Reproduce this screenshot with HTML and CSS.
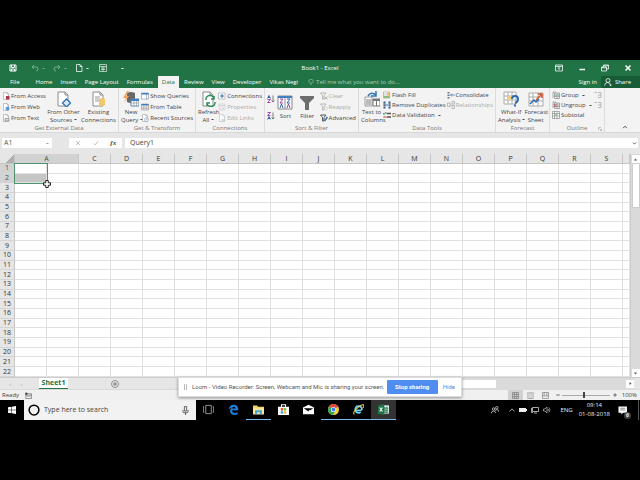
FILE: index.html
```html
<!DOCTYPE html>
<html lang="en">
<head>
<meta charset="utf-8">
<title>Book1 - Excel</title>
<link rel="stylesheet" href="styles.css">
</head>
<body>
<svg class="defs" aria-hidden="true">
  <symbol id="doc" viewBox="0 0 16 16"><path d="M3 1h7l3 3v11H3z" fill="#fff" stroke="#8a8a8a"/><path d="M10 1v3h3" fill="none" stroke="#8a8a8a"/></symbol>
  <symbol id="grid" viewBox="0 0 16 16"><path d="M1 2h14v12H1z" fill="#fff" stroke="#777"/><path d="M1 2h14v3H1z" fill="#3f7fbf"/><path d="M1 8h14M1 11h14M5.500 5v9M10.500 5v9" stroke="#888" fill="none"/></symbol>
  <symbol id="funnel" viewBox="0 0 16 16"><path d="M1 1h14v2l-5 5v7H6V8L1 3z" fill="currentColor"/></symbol>
</svg>

<div class="app">
  <header class="top">
    <div class="titlebar">
      <div class="quick">
        <button aria-label="Save"><svg viewBox="0 0 16 16"><path d="M2 2h12v12H2zM5 2v5h6V2M5 14v-4h6v4" fill="none" stroke="#fff" stroke-width="2"/></svg></button>
        <button class="dim" aria-label="Undo"><svg viewBox="0 0 16 16"><path d="M6 2L2 6l4 4M2 6h8q4 0 4 4t-4 4" fill="none" stroke="#fff" stroke-width="2"/></svg><i></i></button>
        <button class="dim" aria-label="Redo"><svg viewBox="0 0 16 16"><path d="M10 2l4 4-4 4M14 6H6q-4 0-4 4t4 4" fill="none" stroke="#fff" stroke-width="2"/></svg><i></i></button>
        <button class="new" aria-label="New"><svg viewBox="0 0 16 16"><path d="M3 1h7l4 4v10H3zM10 1v4h4" fill="none" stroke="#fff" stroke-width="1.500"/></svg><i></i></button>
        <button aria-label="Form"><svg viewBox="0 0 16 16"><path d="M1 1h14v14H1zM1 5h14M4 8h8M4 11h8M8 5v10" fill="none" stroke="#d5e8dc" stroke-width="1.500"/></svg></button>
        <button aria-label="Customize toolbar"><i></i></button>
      </div>
      <h1>Book1 - Excel</h1>
      <div class="window">
        <button aria-label="Ribbon display options"><svg viewBox="0 0 16 16"><path d="M1 2h14v12H1zM1 5h14M8 12V7M6 9l2-2 2 2" fill="none" stroke="#fff" stroke-width="1.500"/></svg></button>
        <button aria-label="Minimize"><svg viewBox="0 0 16 16"><path d="M3 11h11" stroke="#fff" stroke-width="3"/></svg></button>
        <button aria-label="Restore"><svg viewBox="0 0 16 16"><path d="M1 6h10v8H1zM1 7.500h10M5 6V2h10v8h-4M5 3.500h10" fill="none" stroke="#fff" stroke-width="1.500"/></svg></button>
        <button aria-label="Close"><svg viewBox="0 0 16 16"><path d="M3 3l10 10M13 3L3 13" stroke="#fff" stroke-width="3"/></svg></button>
      </div>
    </div>
    <nav class="tabs">
      <a class="file" href="#">File</a><a href="#">Home</a><a href="#">Insert</a><a href="#">Page Layout</a><a href="#">Formulas</a><a class="on" href="#">Data</a><a href="#">Review</a><a href="#">View</a><a href="#">Developer</a><a href="#">Vikas Negi</a>
      <a class="tell" href="#"><svg viewBox="0 0 16 16"><path d="M5 11q-3-3-3-5a6 5 0 0 1 12 0q0 2-3 5zM6 14h4" fill="none" stroke="#a9cfb8" stroke-width="1.500"/></svg>Tell me what you want to do...</a>
      <a class="sign" href="#">Sign in</a>
      <button class="share"><svg viewBox="0 0 16 16"><circle cx="8" cy="5" r="4" fill="none" stroke="#fff" stroke-width="1.500"/><path d="M1 15q1-6 6-6t5 3M11 14h4M13 12v4" fill="none" stroke="#fff" stroke-width="1.500"/></svg>Share</button>
    </nav>
  </header>

  <section class="ribbon">
    <div class="group external">
      <div class="items">
        <div class="stack">
          <button><svg viewBox="0 0 16 16"><use href="#doc"/><path d="M8 8h7v7H8z" fill="#b5344a"/></svg>From Access</button>
          <button><svg viewBox="0 0 16 16"><use href="#doc"/><circle cx="11" cy="11" r="4" fill="#5b9bd5"/></svg>From Web</button>
          <button><svg viewBox="0 0 16 16"><use href="#doc"/><path d="M6 9h8v5H6z" fill="#ddd" stroke="#666"/></svg>From Text</button>
        </div>
        <button class="big w36"><svg viewBox="0 0 16 16"><use href="#doc"/><path d="M11.500 8l4 4-4 4-4-4z" fill="#dbe9f7" stroke="#2f74b5" stroke-width="1.300"/></svg>From Other<br>Sources <i></i></button>
        <button class="big w36"><svg viewBox="0 0 16 16"><use href="#doc"/><path d="M5 6h5M5 8h4M5 10h4" stroke="#999"/><path d="M9 8q3-2 6 0v6q-3 2-6 0z" fill="#f0c76b"/></svg>Existing<br>Connections</button>
      </div>
      <h2>Get External Data</h2>
    </div>
    <div class="group transform">
      <div class="items">
        <button class="big w24"><svg viewBox="0 0 16 16"><path d="M4 2q4-2 8 0v9q-4 2-8 0z" fill="#686868"/><path d="M4 0L0 7h3l-2 5 5-7H3l3-5z" fill="#eda35b"/><path d="M8 8h8v7H8z" fill="#fff" stroke="#5a87b8"/><path d="M8 8h8v2H8z" fill="#3f7fbf"/><path d="M8 12h8M11 10v5M13.500 10v5" stroke="#999" stroke-width=".7"/></svg>New<br>Query <i></i></button>
        <div class="stack">
          <button><svg viewBox="0 0 16 16"><path d="M1 2h14v12H1z" fill="#fff" stroke="#777"/><path d="M1 2h14v3H1zM10 5h1v9h-1z" fill="#3f7fbf"/></svg>Show Queries</button>
          <button><svg viewBox="0 0 16 16"><use href="#grid"/></svg>From Table</button>
          <button><svg viewBox="0 0 16 16"><use href="#doc"/><circle cx="11" cy="11" r="4" fill="#fff" stroke="#5b8fc5"/><path d="M11 9v2h2" fill="none" stroke="#555"/></svg>Recent Sources</button>
        </div>
      </div>
      <h2>Get &amp; Transform</h2>
    </div>
    <div class="group connections">
      <div class="items">
        <button class="big w24"><svg viewBox="0 0 16 16"><use href="#doc"/><path d="M6 9a4 4 0 0 1 8-1M14 5v3h-3M15 11a4 4 0 0 1-8 1M7 15v-3h3" fill="none" stroke="#2f8f5b" stroke-width="1.500"/></svg>Refresh<br>All <i></i></button>
        <div class="stack">
          <button><svg viewBox="0 0 16 16"><path d="M1 2h13v12H1z" fill="#fff" stroke="#888"/><path d="M4 8h8M8 4v8" stroke="#2f74b5" stroke-width="2"/></svg>Connections</button>
          <button class="off" disabled><svg viewBox="0 0 16 16"><path d="M2 2h12v12H2zM2 5h12M4 8h2M8 8h4M4 11h2M8 11h4" fill="none" stroke="#999"/></svg>Properties</button>
          <button class="off" disabled><svg viewBox="0 0 16 16"><use href="#doc"/><path d="M7 12h7" stroke="#888" stroke-width="2"/></svg>Edit Links</button>
        </div>
      </div>
      <h2>Connections</h2>
    </div>
    <div class="group sort">
      <div class="items">
        <div class="pair">
          <button aria-label="Sort A to Z"><svg viewBox="0 0 16 16"><path d="M1 7l3-6 3 6M2 5h4" fill="none" stroke="#2f5fae" stroke-width="1.800"/><path d="M1 9h6l-6 6h6" fill="none" stroke="#9b3fa5" stroke-width="1.800"/><path d="M12 1v13M9 11l3 3 3-3" fill="none" stroke="#555" stroke-width="1.500"/></svg></button>
          <button aria-label="Sort Z to A"><svg viewBox="0 0 16 16"><path d="M1 1h6L1 7h6" fill="none" stroke="#9b3fa5" stroke-width="1.800"/><path d="M1 15l3-6 3 6M2 13h4" fill="none" stroke="#2f5fae" stroke-width="1.800"/><path d="M12 1v13M9 11l3 3 3-3" fill="none" stroke="#555" stroke-width="1.500"/></svg></button>
        </div>
        <button class="big w20 one"><svg viewBox="0 0 16 16"><path d="M1 1h14v13H1z" fill="#fff" stroke="#888"/><path d="M1 1h14v2H1z" fill="#3f7fbf"/><path d="M8 3v11" stroke="#888"/><path d="M3 4h3L3 8h3M10 13l1.500-4 1.500 4" fill="none" stroke="#9b3fa5"/><path d="M3 13l1.500-4L6 13M10 4h3l-3 4h3" fill="none" stroke="#2f5fae"/></svg>Sort</button>
        <button class="big w24 one"><svg class="gray" viewBox="0 0 16 16"><use href="#funnel"/></svg>Filter</button>
        <div class="stack">
          <button class="off" disabled><svg viewBox="0 0 16 16"><path d="M1 2h11L8 7v7H5V7z" fill="none" stroke="#777" stroke-width="1.500"/><path d="M9 9l6 6M15 9l-6 6" stroke="#888" stroke-width="2"/></svg>Clear</button>
          <button class="off" disabled><svg viewBox="0 0 16 16"><path d="M1 2h11L8 7v7H5V7z" fill="none" stroke="#777" stroke-width="1.500"/><circle cx="12" cy="11" r="3" fill="#fff" stroke="#888"/></svg>Reapply</button>
          <button><svg viewBox="0 0 16 16"><path d="M1 2h11L8 7v7H5V7z" fill="none" stroke="#555" stroke-width="2"/><path d="M9 14l6-8" stroke="#2f74b5" stroke-width="3"/></svg>Advanced</button>
        </div>
      </div>
      <h2>Sort &amp; Filter</h2>
    </div>
    <div class="group tools">
      <div class="items">
        <button class="big w28"><svg viewBox="0 0 16 16"><path d="M1 6h7v9H1z" fill="#fff" stroke="#999"/><path d="M2 9h5M2 11h5M2 13h5" stroke="#777"/><path d="M9 8h7v7H9z" fill="#fff" stroke="#777"/><path d="M9 8h7v2H9z" fill="#777"/><path d="M12.500 10v5" stroke="#777"/><path d="M4 5q3-5 8-1M12 0v5H7" fill="none" stroke="#2f74b5" stroke-width="1.500"/></svg>Text to<br>Columns</button>
        <div class="stack tight">
          <button><svg viewBox="0 0 16 16"><path d="M1 2h12v12H1zM1 6h12M1 10h12" fill="#fff" stroke="#888"/><path d="M1 10h12v4H1z" fill="#8bbd78"/><path d="M12 0L7 7h3l-2 5 6-7h-3z" fill="#f0b34b"/></svg>Flash Fill</button>
          <button><svg viewBox="0 0 16 16"><path d="M1 1h4v14H1zM11 1h4v14h-4z" fill="#35618e"/><path d="M1 6h4M11 6h4M1 11h4M11 11h4M5 8h6" stroke="#fff"/><path d="M5 8h5" stroke="#333" stroke-width="1.500"/></svg>Remove Duplicates</button>
          <button><svg viewBox="0 0 16 16"><path d="M7 5h9M7 12h9" stroke="#555" stroke-width="3"/><path d="M0 4l2 3 4-5" fill="none" stroke="#2f8f5b" stroke-width="2"/><path d="M1 10l4 4M5 10l-4 4" stroke="#c43" stroke-width="1.500"/></svg>Data Validation <i></i></button>
        </div>
        <div class="stack tight">
          <button><svg viewBox="0 0 16 16"><path d="M1 2h4v3H1zM1 7h4v3H1zM1 12h4v3H1z" fill="#777"/><path d="M7 8h9M10 5L7 8l3 3" fill="none" stroke="#2f74b5" stroke-width="1.500"/></svg>Consolidate</button>
          <button class="off" disabled><svg viewBox="0 0 16 16"><path d="M1 4h5v7H1zM10 1h5v5h-5zM10 9h5v6h-5zM6 8h4" fill="none" stroke="#777" stroke-width="1.500"/></svg>Relationships</button>
        </div>
      </div>
      <h2>Data Tools</h2>
    </div>
    <div class="group forecast">
      <div class="items">
        <button class="big w28"><svg viewBox="0 0 16 16"><path d="M1 1h12v12H1zM1 5h12M1 9h12M5 1v12M9 1v12" fill="#fff" stroke="#aaa"/><path d="M5 5h4v4H5z" fill="#f3cf86"/><path d="M9 8q0-3 3-3t3 3-3 4M12 13.500v2" fill="none" stroke="#2b6cb0" stroke-width="2"/></svg>What-If<br>Analysis <i></i></button>
        <button class="big w24"><svg viewBox="0 0 16 16"><path d="M1 2h14v13H1zM1 6h14M1 10h14M5 2v13M10 2v13" fill="#fff" stroke="#aaa"/><path d="M2 13l4-4 2 2 3-3" fill="none" stroke="#2b6cb0" stroke-width="1.500"/><path d="M8 9l6-6M10 3h4v4" fill="none" stroke="#d4562f" stroke-width="1.500"/></svg>Forecast<br>Sheet</button>
      </div>
      <h2>Forecast</h2>
    </div>
    <div class="group outline">
      <div class="items">
        <div class="stack tight">
          <button><svg viewBox="0 0 16 16"><path d="M5 4h10v11H5zM5 8h10M5 11h10M10 4v11M2 14V2h6" fill="none" stroke="#666"/><path d="M6 8h8v3H6z" fill="#9ac5a7"/></svg>Group <i></i></button>
          <button><svg viewBox="0 0 16 16"><path d="M5 4h10v11H5zM5 8h10M5 11h10M10 4v11M2 14V2h6" fill="none" stroke="#666"/><path d="M3 6l6 6M9 6l-6 6" stroke="#c44" stroke-width="1.500"/></svg>Ungroup <i></i></button>
          <button><svg viewBox="0 0 16 16"><path d="M1 1h14v14H1zM1 5h14M1 10h14M5 1v14M10 1v14" fill="#fff" stroke="#666"/><path d="M5 5h5v5H5z" fill="#9ac5a7"/></svg>Subtotal</button>
        </div>
        <div class="stack tight detail">
          <button class="off" disabled aria-label="Show detail"><svg viewBox="0 0 16 16"><path d="M1 3h5M8 3h6v10H8M8 8h6" fill="none" stroke="#777" stroke-width="1.500"/></svg></button>
          <button class="off" disabled aria-label="Hide detail"><svg viewBox="0 0 16 16"><path d="M1 3h5M8 3h6v10H8M8 8h6" fill="none" stroke="#777" stroke-width="1.500"/></svg></button>
        </div>
      </div>
      <h2>Outline</h2>
      <button class="launch" aria-label="Outline settings"><svg viewBox="0 0 16 16"><path d="M2 12V2h10M6 6l8 8M14 8v6H8" fill="none" stroke="#777" stroke-width="1.500"/></svg></button>
    </div>
    <button class="collapse" aria-label="Collapse ribbon"><svg viewBox="0 0 16 16"><path d="M3 11l5-5 5 5" fill="none" stroke="#444" stroke-width="2.500"/></svg></button>
  </section>

  <section class="formula">
    <label class="name"><input aria-label="Name box" value="A1"><i></i></label>
    <span class="dots"></span>
    <div class="edit">
      <button aria-label="Cancel"><svg viewBox="0 0 16 16"><path d="M3 3l10 10M13 3L3 13" stroke="#aaa" stroke-width="2"/></svg></button>
      <button aria-label="Enter"><svg viewBox="0 0 16 16"><path d="M2 9l4 4 8-10" fill="none" stroke="#aaa" stroke-width="2"/></svg></button>
      <button class="fx" aria-label="Insert function">fx</button>
    </div>
    <input class="bar" aria-label="Formula bar" value="Query1">
    <button class="expand" aria-label="Expand formula bar"><svg viewBox="0 0 16 16"><path d="M3 5l5 5 5-5" fill="none" stroke="#555" stroke-width="3"/></svg></button>
  </section>

  <main class="sheet">
    <div class="cells">
      <table id="cells"></table>
      <div class="range"></div>
      <svg class="cursor" viewBox="0 0 16 16"><path d="M5.500 1h5v4.500H15v5h-4.500V15h-5v-4.500H1v-5h4.500z" fill="#fff" stroke="#222" stroke-width="2"/></svg>
    </div>
    <div class="vscroll">
      <button aria-label="Scroll up"><svg viewBox="0 0 16 16"><path d="M3 11l5-6 5 6z" fill="#555"/></svg></button>
      <span class="thumb"></span>
      <button aria-label="Scroll down"><svg viewBox="0 0 16 16"><path d="M3 5l5 6 5-6z" fill="#555"/></svg></button>
    </div>
  </main>

  <footer class="bottom">
    <div class="sheets">
      <button class="nav" aria-label="Previous sheet">‹</button>
      <button class="nav" aria-label="Next sheet">›</button>
      <a class="current" href="#">Sheet1</a>
      <button class="add" aria-label="New sheet"><svg viewBox="0 0 16 16"><circle cx="8" cy="8" r="7" fill="none" stroke="#777" stroke-width="1.500"/><path d="M8 4v8M4 8h8" stroke="#777" stroke-width="2"/></svg></button>
      <div class="hscroll"><span class="thumb"></span><button aria-label="Scroll right"><svg viewBox="0 0 16 16"><path d="M5 3l6 5-6 5z" fill="#444"/></svg></button></div>
    </div>
    <div class="status">
      <span>Ready</span>
      <svg class="macro" viewBox="0 0 16 16"><path d="M2 4h13v11H2zM2 7h13M5 10h3M10 10h3" fill="none" stroke="#666" stroke-width="1.500"/><circle cx="3" cy="4" r="3" fill="#555"/></svg>
      <button class="view on" aria-label="Normal"><svg viewBox="0 0 16 16"><path d="M1 1h14v14H1zM1 5.500h14M1 10.500h14M5.500 1v14M10.500 1v14" fill="none" stroke="#777" stroke-width="1.500"/></svg></button>
      <button class="view" aria-label="Page layout"><svg viewBox="0 0 16 16"><path d="M1 1h14v14H1zM4 3h8v12H4zM6 6h4M6 9h4M6 12h4" fill="none" stroke="#888"/></svg></button>
      <button class="view" aria-label="Page break preview"><svg viewBox="0 0 16 16"><path d="M1 1h14v14H1zM5 1v8h6V1M1 9h4M11 9h4" fill="none" stroke="#777" stroke-width="1.500"/></svg></button>
      <button class="step" aria-label="Zoom out"><svg viewBox="0 0 16 16"><path d="M1 8h14" stroke="#444" stroke-width="3"/></svg></button>
      <input class="zoom" type="range" aria-label="Zoom" min="0" max="100" value="46">
      <button class="step" aria-label="Zoom in"><svg viewBox="0 0 16 16"><path d="M1 8h14M8 1v14" stroke="#444" stroke-width="3"/></svg></button>
      <span class="percent">100%</span>
    </div>
    <div class="notice">
      <span class="grip"></span>
      <span class="msg">Loom - Video Recorder: Screen, Webcam and Mic is sharing your screen.</span>
      <button class="stop">Stop sharing</button>
      <a href="#">Hide</a>
    </div>
  </footer>
</div>

<div class="taskbar">
  <button class="start" aria-label="Start"><svg viewBox="0 0 16 16"><path d="M0 2.500l7-1v6H0zM8 1.300L16 0v7.500H8zM0 8.500h7v6l-7-1zM8 8.500h8V16l-8-1.300z" fill="#fff"/></svg></button>
  <label class="search"><svg viewBox="0 0 16 16"><circle cx="8" cy="8" r="6.500" fill="none" stroke="#000" stroke-width="2"/></svg><input placeholder="Type here to search" aria-label="Search"><svg class="mic" viewBox="0 0 16 16"><path d="M6 1h4v8H6zM3.500 7v3q0 2 2 2h5q2 0 2-2V7M8 12v4" fill="none" stroke="#333" stroke-width="1.300"/></svg></label>
  <button class="app-icon" aria-label="Task view"><svg viewBox="0 0 16 16"><path d="M4 2h8v12H4zM2 4H.5v8H2M14 4h1.500v8H14" fill="none" stroke="#ccc"/></svg></button>
  <button class="app-icon" aria-label="Edge"><svg viewBox="0 0 16 16"><path d="M1 8Q2 1 8.500 1 15 1 15 9H6q0 4 4 4 2 0 4-1v3q-2 1-5 1-6-1-6-6 0-3 3-5-3 1-5 3zM6 6.500h5Q11 4 8.500 4 6 4 6 6.500z" fill="#1b80dc"/></svg></button>
  <button class="app-icon open" aria-label="File Explorer"><svg viewBox="0 0 16 16"><path d="M0 2h6l1 2h9v11H0z" fill="#f3d36b"/><path d="M0 6h16v9H0z" fill="#fbe594"/><path d="M3 9h10v6h-3v-3H6v3H3z" fill="#45a5dd"/></svg></button>
  <button class="app-icon" aria-label="Store"><svg viewBox="0 0 16 16"><path d="M5 5V1h6v4" fill="none" stroke="#fff" stroke-width="1.500"/><path d="M0 4h16v12H0z" fill="#fff"/><path d="M4 6h3.500v3.500H4z" fill="#e64a2e"/><path d="M8.500 6H12v3.500H8.500z" fill="#7ab82e"/><path d="M4 10.500h3.500V14H4z" fill="#2a9ee0"/><path d="M8.500 10.500H12V14H8.500z" fill="#f4b92a"/></svg></button>
  <button class="app-icon" aria-label="Mail"><svg viewBox="0 0 16 16"><path d="M0 5l8-4 8 4v10H0z" fill="#fff"/><path d="M1 6h14l-5 3.500L9 8l-1 3z" fill="#000"/></svg></button>
  <button class="app-icon open" aria-label="Chrome"><svg viewBox="0 0 16 16"><circle cx="8" cy="8" r="8" fill="#f6cf3d"/><path d="M8 8L1 4a8 8 0 0 1 14 0z" fill="#de4b3c"/><path d="M8 8L1 4a8 8 0 0 0 6 12l4-6z" fill="#3ba55a"/><circle cx="8" cy="8" r="3.800" fill="#fff"/><circle cx="8" cy="8" r="2.900" fill="#3f83ef"/></svg></button>
  <button class="app-icon open" aria-label="Internet Explorer"><svg viewBox="0 0 16 16"><path d="M12.500 9.300H4Q4.500 13 8 13q2 0 3-1.500" fill="none" stroke="#6fd0f5" stroke-width="2.500"/><path d="M3.200 9.500Q3 3.200 8 3.200t5 6" fill="none" stroke="#6fd0f5" stroke-width="2.500"/><path d="M2 15q-3-2 3-8T15 1q2 2-1 5" fill="none" stroke="#f0cc4a" stroke-width="1.500"/></svg></button>
  <button class="app-icon open active" aria-label="Excel"><svg viewBox="0 0 16 16"><path d="M8 2h8v12H8z" fill="#e8f3ec"/><path d="M10 4v9M13 4v9M9 6h6M9 9h6M9 12h6" stroke="#1f7346" stroke-width="1.200"/><path d="M0 2l9-2v16l-9-2z" fill="#1f7346"/><path d="M2.500 5l4 6M6.500 5l-4 6" stroke="#fff" stroke-width="1.500"/></svg></button>
  <div class="tray">
    <svg viewBox="0 0 16 16"><circle cx="5" cy="6" r="2.500" fill="none" stroke="#ddd" stroke-width="1.500"/><circle cx="11.500" cy="3.500" r="2.500" fill="none" stroke="#ddd" stroke-width="1.500"/><path d="M0 15q1-5 5-5t4 4M8 9q2-2 5-1.500t3 4.500" fill="none" stroke="#ddd" stroke-width="1.500"/></svg>
    <svg class="chev" viewBox="0 0 16 16"><path d="M1 12l7-7 7 7" fill="none" stroke="#ddd" stroke-width="2"/></svg>
    <svg viewBox="0 0 16 16"><path d="M0 4h14v8H0zM14 6h2v4h-2z" fill="#eee"/></svg>
    <svg viewBox="0 0 16 16"><path d="M3 3h12v8H3zM6 14h6M1 4v9h3" fill="none" stroke="#ddd" stroke-width="1.500"/></svg>
    <svg viewBox="0 0 16 16"><path d="M1 6h3l4-4v12l-4-4H1zM10 6q2 2 0 4M12 3q4 5 0 10" fill="none" stroke="#ccc" stroke-width="1.300"/></svg>
    <span class="lang">ENG</span>
    <time class="clock">09:14<br>01-08-2018</time>
    <button class="alerts" aria-label="6 notifications"><svg viewBox="0 0 16 16"><path d="M0 1h15v11H8l-3 3v-3H0z" fill="#fff"/><path d="M3 4h9M3 7h9" stroke="#333"/></svg><b>6</b></button>
  </div>
</div>
<script src="grid.js"></script>
</body>
</html>
```
FILE: styles.css
```css
* { box-sizing: border-box; }
body {
  margin: 0;
  min-height: 100vh;
  padding: 60px 0;
  display: flex;
  flex-direction: column;
  background: #000;
  color: #444;
  font: 6px/8px "Open Sans", "Noto Sans", sans-serif;
  overflow: hidden;
}
.defs { position: absolute; width: 0; height: 0; }
button, input { font: inherit; color: inherit; background: none; border: 0; padding: 0; margin: 0; min-width: 0; outline: 0; }
button { display: flex; align-items: center; justify-content: center; white-space: nowrap; }
a { color: inherit; text-decoration: none; }
svg { width: 8px; height: 8px; flex: none; display: block; }
h1, h2 { margin: 0; font: inherit; }
i { display: inline-block; border: 1px solid transparent; border-top-color: currentColor; border-bottom: 0; width: 3px; vertical-align: middle; flex: none; }

.app { flex: 1; display: flex; flex-direction: column; background: #e6e6e6; }

/* Title and tabs */
.top { background: #217346; color: #fff; }
.titlebar { display: grid; grid-template-columns: 1fr auto 1fr; align-items: center; height: 16px; }
.quick { display: flex; padding-left: 9px; gap: 14px; }
.quick button { gap: 3px; height: 8px; }
.quick .dim { opacity: .4; margin-right: -6px; }
.quick .new { margin-right: -4px; }
.window { display: flex; justify-content: flex-end; gap: 15px; padding-right: 8px; }
.tabs { display: flex; height: 12px; line-height: 12px; white-space: nowrap; }
.tabs a { padding: 0 4px; }
.tabs .file { padding: 0 12px 0 10px; }
.tabs .on { background: #f3f3f3; color: #217346; margin: 0 1px; }
.tabs .tell { display: flex; align-items: center; gap: 2px; color: #a9cfb8; padding-left: 6px; }
.tabs .tell svg { width: 6px; }
.tabs .sign { margin-left: auto; }
.share { background: #185c37; gap: 3px; padding: 0 9px 0 3px; }

/* Ribbon */
.ribbon { display: flex; height: 45px; background: #f3f3f3; border-bottom: 1px solid #d8d8d8; position: relative; }
.group { position: relative; display: flex; flex-direction: column; border-right: 1px solid #dcdcdc; padding: 2px 2px 0; flex: none; }
.group h2 { text-align: center; color: #777; line-height: 8px; margin-top: auto; }
.items { display: flex; height: 34px; }
.stack { display: flex; flex-direction: column; align-items: flex-start; }
.stack button { height: 11px; gap: 1px; }
.stack.tight button { height: 10px; }
.stack button i { margin-left: 2px; }
.off { color: #aaa; }
.off svg { opacity: .6; }
.gray { color: #6d6d6d; }
.big { display: block; text-align: center; line-height: 8px; }
.big svg { width: 16px; height: 16px; margin: 0 auto 1px; }
.w20 { width: 20px; }
.w24 { width: 24px; }
.w28 { width: 28px; }
.w36 { width: 36px; }
.pair { display: flex; flex-direction: column; justify-content: space-around; }
.external { width: 119px; }
.transform { width: 77px; }
.connections { width: 69px; }
.sort { width: 94px; }
.sort .items { gap: 1px; }
.tools { width: 137px; }
.tools .items { gap: 1px; }
.forecast { width: 54px; }
.outline { width: 55px; }
.detail { margin-left: auto; }
.launch { position: absolute; right: 2px; bottom: 1px; }
.launch svg { width: 4px; height: 4px; }
.collapse { margin: auto 12px 2px auto; }
.collapse svg { width: 6px; height: 6px; }

/* Formula bar */
.formula { display: flex; height: 10px; margin: 5px 2px 6px; font-size: 7px; }
.name { display: flex; align-items: center; width: 50px; background: #fff; padding: 0 3px 0 2px; color: #555; }
.name input { flex: 1; width: 20px; }
.name i { opacity: .6; }
.dots { width: 17px; background: radial-gradient(#aaa 1px, transparent 1px) 0 0 / 17px 4px; opacity: .5; }
.edit { display: flex; justify-content: space-around; width: 53px; background: #fff; }
.edit svg { width: 6px; height: 6px; }
.edit .fx { font: italic bold 7px/10px "Liberation Serif", serif; }
.bar { flex: 1; background: #fff; margin-left: 3px; padding-left: 5px; }
.expand { background: #fff; width: 8px; }
.expand svg { width: 5px; height: 5px; }

/* Grid */
.sheet { flex: 1; display: flex; }
.cells { flex: 1; position: relative; background: #fff; overflow: hidden; }
table { width: 100%; height: 100%; table-layout: fixed; border-spacing: 0; font-size: 7px; line-height: 8px; }
th, td { padding: 0; border: 0 solid #e1e1e1; border-width: 0 1px 1px 0; }
th { font-weight: 400; background: #e6e6e6; color: #333; border-color: #c6c6c6; }
thead th { height: 10px; }
tbody th { text-align: center; border-bottom-color: #d4d4d4; }
.hot { background: #d2d2d2; color: #3d5a4a; }
.picked { background: #c6c6c6; }
.corner { background: linear-gradient(135deg, #e6e6e6 65%, #b0b0b0 65%); }
.range { position: absolute; left: 14px; top: 9px; width: 34px; height: 21px; border: 1px solid #4f9470; }
.cursor { position: absolute; left: 43px; top: 26px; }
.vscroll { width: 10px; background: #dadada; display: flex; flex-direction: column; align-items: center; padding: 1px 1px 0; border-left: 1px solid #ccc; }
.vscroll button { background: #fff; width: 8px; height: 8px; }
.vscroll button:last-child { margin-top: auto; }
.vscroll svg, .hscroll svg { width: 5px; height: 5px; }
.vscroll .thumb { width: 8px; height: 45px; background: #fff; border: 1px solid #ccc; }

/* Sheet tabs and status */
.bottom { position: relative; }
.sheets { display: flex; height: 12px; border-top: 1px solid #ccc; align-items: stretch; }
.nav { width: 11px; color: #999; }
.nav:first-child { margin-left: 5px; }
.current { width: 29px; margin-left: 12px; background: #fff; color: #217346; font-weight: 700; font-size: 7px; line-height: 10px; text-align: center; border-bottom: 1px solid #217346; height: 11px; }
.add { margin-left: 43px; }
.hscroll { margin-left: auto; width: 60%; display: flex; align-items: center; justify-content: space-between; background: #dadada; margin-right: 6px; }
.hscroll .thumb { width: 64%; height: 8px; background: #fff; }
.hscroll button { width: 8px; height: 8px; background: #fff; }
.status { display: flex; align-items: center; height: 11px; background: #f0f0f0; border-top: 1px solid #dadada; padding: 0 3px 0 2px; }
.macro { margin: 0 auto 0 6px; width: 7px; height: 7px; }
.view { width: 15px; height: 10px; }
.view svg { width: 7px; height: 7px; }
.view.on { background: #d0d0d0; }
.step { width: 9px; }
.step svg { width: 4px; height: 4px; }
.zoom { appearance: none; width: 48px; height: 8px; background: linear-gradient(#aaa, #aaa) center / 100% 1px no-repeat; }
.zoom::-webkit-slider-thumb { appearance: none; width: 2px; height: 6px; background: #444; }
.percent { width: 18px; text-align: right; }
.notice { position: absolute; left: 50%; bottom: 3px; transform: translateX(-50%); display: flex; align-items: center; width: 284px; height: 20px; padding: 0 5px; background: #fff; border: 1px solid #ddd; box-shadow: 0 1px 3px #0006; color: #555; font-family: Roboto, sans-serif; white-space: nowrap; }
.grip { width: 3px; height: 6px; border: 1px solid #bbb; border-width: 0 1px; }
.msg { flex: 1; padding-left: 5px; }
.stop { background: #4f8df0; color: #fff; width: 51px; height: 14px; font-weight: 700; border-radius: 1px; }
.notice a { color: #4f8df0; padding: 0 1px 0 5px; }

/* Taskbar */
.taskbar { display: flex; height: 20px; color: #eee; background: #000; }
.start { width: 24px; }
.search { display: flex; align-items: center; width: 172px; background: #f2f2f2; color: #333; padding: 0 6px 0 4px; font-size: 7px; }
.search svg { width: 12px; height: 12px; }
.search .mic { width: 9px; height: 9px; }
.search input { flex: 1; padding-left: 4px; }
.search input::placeholder { color: #444; opacity: 1; }
.app-icon { width: 25px; border-bottom: 1px solid transparent; }
.app-icon svg { width: 11px; height: 11px; }
.app-icon.open { border-bottom-color: #76b9ed; }
.active { background: #333; }
.tray { margin-left: auto; display: flex; align-items: center; gap: 4px; padding-right: 10px; margin-right: 1px; border-right: 1px solid #555; }
.tray .chev { width: 6px; margin-left: 6px; }
.tray .lang { padding-left: 5px; }
.clock { text-align: center; padding: 0 4px 0 2px; line-height: 9px; }
.alerts { position: relative; }
.alerts svg { width: 10px; height: 9px; }
.alerts b { position: absolute; right: -3px; bottom: -4px; width: 7px; height: 7px; border-radius: 50%; background: #444; font-size: 5px; line-height: 7px; }
```
FILE: grid.js
```javascript
const letters = [..."CDEFGHIJKLMNOPQRS"];
const cols = letters.length + 2;
let html = '<colgroup><col style="width:15px">' + '<col style="width:32px">'.repeat(cols) + "<col></colgroup>";
html += '<thead><tr><th class="corner"></th><th class="hot" colspan="2">A</th>' + letters.map(l => `<th>${l}</th>`).join("") + "<th></th></tr></thead><tbody>";
for (let r = 1; r <= 22; r++) {
  html += `<tr><th${r < 3 ? ' class="hot"' : ""}>${r}</th><td${r === 2 ? ' class="picked"' : ""}></td>` + "<td></td>".repeat(cols) + "</tr>";
}
document.getElementById("cells").innerHTML = html + "</tbody>";
```
